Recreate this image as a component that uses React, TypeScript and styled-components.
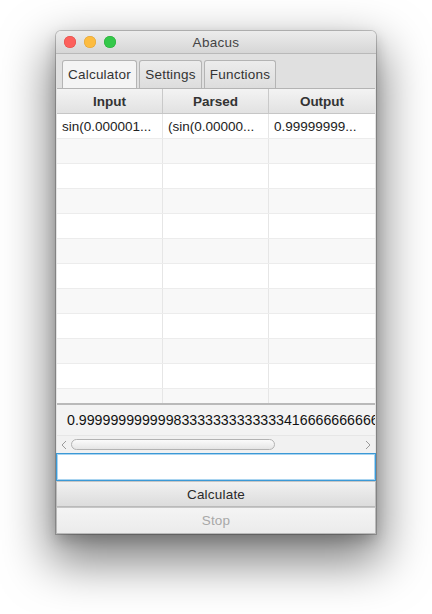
import styled, { createGlobalStyle } from 'styled-components'

const GlobalStyle = createGlobalStyle`
  html, body {
    margin: 0;
    background: #ffffff;
    font-family: "Liberation Sans", Arial, sans-serif;
  }
`

const Page = styled.div`
  min-height: 614px;
  box-sizing: border-box;
  padding: 31px 0 0 56px;
`

const Window = styled.div`
  width: 320px;
  border-radius: 5px 5px 0 0;
  overflow: hidden;
  background: #e3e3e3;
  box-shadow: 0 0 0 1px rgba(0, 0, 0, 0.2), 0 22px 48px 6px rgba(0, 0, 0, 0.5), 0 6px 14px rgba(0, 0, 0, 0.18);
`

const TitleBar = styled.div`
  height: 22px;
  display: grid;
  grid-template-columns: 1fr auto 1fr;
  align-items: center;
  background: linear-gradient(#ececec, #d6d6d6);
  border-bottom: 1px solid #b9b9b9;
`

const Lights = styled.div`
  display: flex;
  gap: 8px;
  padding-left: 8px;
`

const Light = styled.span<{ color: string; edge: string }>`
  width: 12px;
  height: 12px;
  border-radius: 50%;
  background: ${({ color }) => color};
  box-shadow: inset 0 0 0 0.5px ${({ edge }) => edge};
`

const Title = styled.div`
  font-size: 13.5px;
  color: #444;
  letter-spacing: 0.3px;
`

const TabHeader = styled.div`
  display: flex;
  gap: 2px;
  height: 28px;
  padding: 6px 0 0 6px;
  background: #e0e0e0;
`

const Tab = styled.div<{ selected?: boolean; w: number }>`
  width: ${({ w }) => w}px;
  box-sizing: border-box;
  display: flex;
  align-items: center;
  justify-content: center;
  font-size: 13.5px;
  letter-spacing: 0.2px;
  color: #333;
  border: 1px solid #b4b4b4;
  border-bottom: none;
  border-radius: 3px 3px 0 0;
  background: ${({ selected }) => (selected ? '#f4f4f4' : 'linear-gradient(#ececec, #dddddd)')};
`

const Table = styled.div`
  margin: 0 1px;
  border-top: 1px solid #b4b4b4;
  background: #ffffff;
`

const HeaderRow = styled.div`
  display: grid;
  grid-template-columns: 105px 106px 1fr;
  height: 24px;
  background: linear-gradient(#f3f3f3, #e2e2e2);
  border-bottom: 1px solid #c6c6c6;
`

const HeaderCell = styled.div`
  display: flex;
  align-items: center;
  justify-content: center;
  font-size: 13.5px;
  font-weight: bold;
  color: #333;
  & + & {
    border-left: 1px solid #c9c9c9;
  }
`

const Body = styled.div`
  height: 289px;
  overflow: hidden;
`

const Row = styled.div<{ odd: boolean }>`
  display: grid;
  grid-template-columns: 105px 106px 1fr;
  height: 25px;
  box-sizing: border-box;
  border-bottom: 1px solid #ececec;
  background: ${({ odd }) => (odd ? '#f8f8f8' : '#ffffff')};
`

const Cell = styled.div`
  display: flex;
  align-items: center;
  padding: 0 5px;
  font-size: 13.5px;
  color: #222;
  white-space: nowrap;
  overflow: hidden;
  & + & {
    border-left: 1px solid #e6e6e6;
  }
`

const OutputPane = styled.div`
  border-top: 2px solid #b9b9b9;
  background: #f3f3f3;
`

const OutputText = styled.div`
  height: 30px;
  display: flex;
  align-items: center;
  padding-left: 10px;
  font-size: 14.2px;
  color: #111;
  white-space: nowrap;
  overflow: hidden;
`

const ScrollBar = styled.div`
  height: 17px;
  display: flex;
  align-items: center;
  gap: 4px;
  padding: 0 4px;
  border-top: 1px solid #e6e6e6;
  background: #f1f1f1;
`

const Arrow = styled.span`
  display: flex;
  color: #9a9a9a;
`

const Track = styled.div`
  flex: 1;
  display: flex;
`

const Thumb = styled.div`
  width: 204px;
  height: 11px;
  box-sizing: border-box;
  border: 1px solid #b3b3b3;
  border-radius: 6px;
  background: linear-gradient(#fbfbfb, #e5e5e5);
`

const Input = styled.input`
  display: block;
  width: 100%;
  height: 28px;
  box-sizing: border-box;
  margin: 0;
  border: 1px solid #3b99d6;
  box-shadow: inset 0 0 0 1px #a9d4f0;
  background: #ffffff;
  outline: none;
  font-size: 14px;
`

const Button = styled.div<{ disabled?: boolean; h: number }>`
  height: ${({ h }) => h}px;
  box-sizing: border-box;
  display: flex;
  align-items: center;
  justify-content: center;
  font-size: 13.5px;
  letter-spacing: 0.2px;
  color: ${({ disabled }) => (disabled ? '#a8a8a8' : '#2a2a2a')};
  border: 1px solid #bababa;
  border-top-color: #c6c6c6;
  background: ${({ disabled }) => (disabled ? 'linear-gradient(#f4f4f4, #ebebeb)' : 'linear-gradient(#f1f1f1, #dcdcdc)')};
`

const rows = [
  ['sin(0.000001...', '(sin(0.00000...', '0.99999999...'],
  ...Array.from({ length: 11 }, () => ['', '', '']),
]

const Chevron = ({ left }: { left?: boolean }) => (
  <svg width="6" height="10" viewBox="0 0 6 10">
    <path d={left ? 'M5 1 L1 5 L5 9' : 'M1 1 L5 5 L1 9'} fill="none" stroke="currentColor" strokeWidth="1" />
  </svg>
)

export default function App() {
  return (
    <Page>
      <GlobalStyle />
      <Window>
        <TitleBar>
          <Lights>
            <Light color="#fc605c" edge="#de4a44" />
            <Light color="#fdbc40" edge="#dea034" />
            <Light color="#34c84a" edge="#27aa35" />
          </Lights>
          <Title>Abacus</Title>
          <span />
        </TitleBar>
        <TabHeader>
          <Tab selected w={75}>Calculator</Tab>
          <Tab w={63}>Settings</Tab>
          <Tab w={72}>Functions</Tab>
        </TabHeader>
        <Table>
          <HeaderRow>
            <HeaderCell>Input</HeaderCell>
            <HeaderCell>Parsed</HeaderCell>
            <HeaderCell>Output</HeaderCell>
          </HeaderRow>
          <Body>
            {rows.map((r, i) => (
              <Row key={i} odd={i % 2 === 1}>
                {r.map((c, j) => (
                  <Cell key={j}>{c}</Cell>
                ))}
              </Row>
            ))}
          </Body>
          <OutputPane>
            <OutputText>0.999999999999833333333333334166666666666666667</OutputText>
            <ScrollBar>
              <Arrow><Chevron left /></Arrow>
              <Track><Thumb /></Track>
              <Arrow><Chevron /></Arrow>
            </ScrollBar>
          </OutputPane>
        </Table>
        <Input />
        <Button h={26}>Calculate</Button>
        <Button h={27} disabled>Stop</Button>
      </Window>
    </Page>
  )
}
